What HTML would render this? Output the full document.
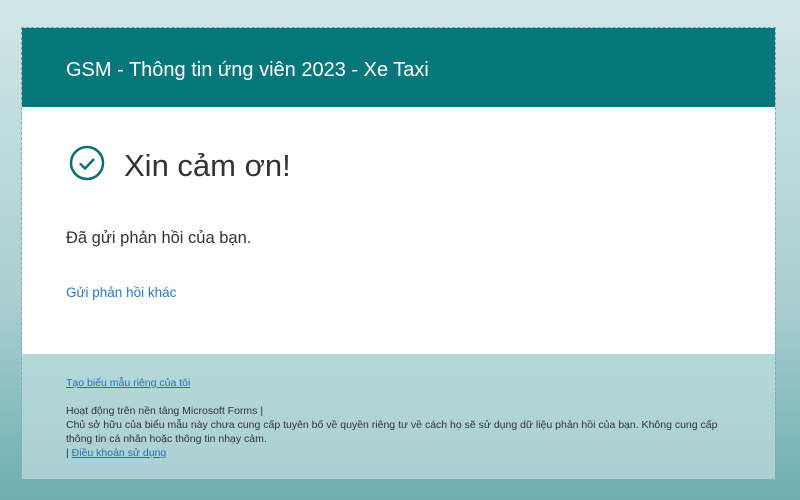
<!DOCTYPE html>
<html><head><meta charset="utf-8"><style>
body{margin:0;width:800px;height:500px;overflow:hidden;background:linear-gradient(#d2e6e8,#a9cfd1 60%,#6eaeb0);font-family:"Liberation Sans","DejaVu Sans",sans-serif;}
.card{position:absolute;left:21px;top:27px;width:755px;height:453px;border:1px dashed #8aa;box-sizing:border-box;}
.hd{position:absolute;left:0;top:0;right:0;height:79px;background:#04777a;}
.hd div{position:absolute;left:44px;top:31px;color:#fff;font-size:20px;}
.wh{position:absolute;left:0;top:79px;right:0;height:247px;background:#fff;}
.ft{position:absolute;left:0;top:326px;right:0;bottom:0;background:linear-gradient(#b5d8da,#a9d0d2);font-size:10.5px;color:#333;}
a{color:#2a6db5;text-decoration:underline;}
</style></head><body>
<div class="card">
<div class="hd"><div>GSM - Thông tin ứng viên 2023 - Xe Taxi</div></div>
<div class="wh">
<svg style="position:absolute;left:47px;top:38px" width="36" height="36" viewBox="0 0 36 36"><circle cx="18" cy="18" r="16" fill="none" stroke="#0a6f72" stroke-width="2.5"/><path d="M11 18.5l5 5 9-9.5" fill="none" stroke="#0a6f72" stroke-width="2.5"/></svg>
<div style="position:absolute;left:102px;top:41px;font-size:31px;color:#333">Xin cảm ơn!</div>
<div style="position:absolute;left:44px;top:122px;font-size:16.5px;color:#333">Đã gửi phản hồi của bạn.</div>
<div style="position:absolute;left:44px;top:178px;font-size:13.5px;color:#2b7bbf">Gửi phản hồi khác</div>
</div>
<div class="ft">
<div style="position:absolute;left:44px;top:23px"><a>Tạo biểu mẫu riêng của tôi</a></div>
<div style="position:absolute;left:44px;top:50px;line-height:14px;width:680px">Hoạt động trên nền tảng Microsoft Forms |<br>Chủ sở hữu của biểu mẫu này chưa cung cấp tuyên bố về quyền riêng tư về cách họ sẽ sử dụng dữ liệu phản hồi của bạn. Không cung cấp thông tin cá nhân hoặc thông tin nhạy cảm.<br>| <a>Điều khoản sử dụng</a></div>
</div>
</div>
</body></html>
